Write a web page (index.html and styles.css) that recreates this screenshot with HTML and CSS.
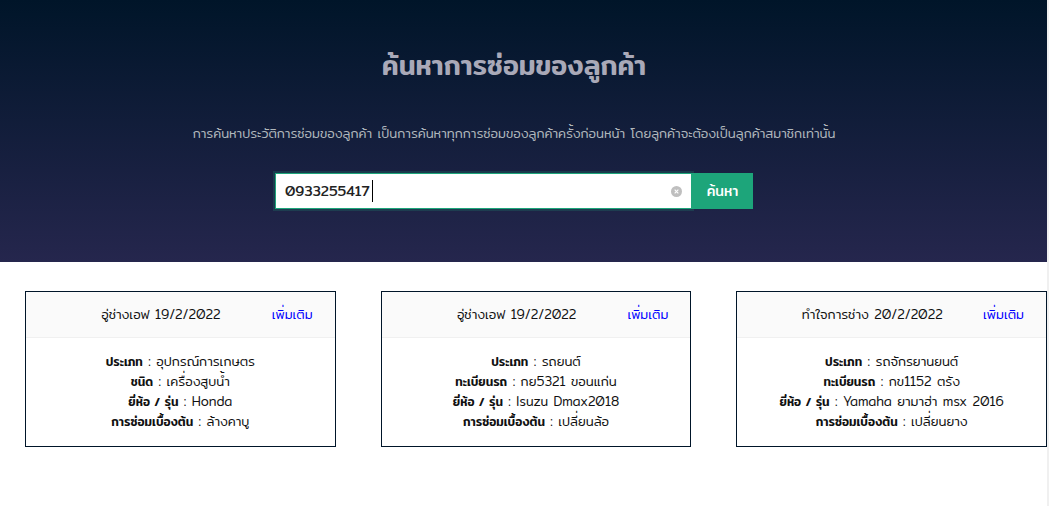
FILE: index.html
```html
<!DOCTYPE html>
<html lang="th">
<head>
<meta charset="utf-8">
<meta name="viewport" content="width=device-width, initial-scale=1">
<title>ค้นหาการซ่อมของลูกค้า</title>
<link rel="stylesheet" href="styles.css">
</head>
<body>
<main class="page">
  <header class="hero">
    <h1 class="hero-title">ค้นหาการซ่อมของลูกค้า</h1>
    <p class="hero-text">การค้นหาประวัติการซ่อมของลูกค้า เป็นการค้นหาทุกการซ่อมของลูกค้าครั้งก่อนหน้า โดยลูกค้าจะต้องเป็นลูกค้าสมาชิกเท่านั้น</p>
    <form class="search">
      <div class="search-field">
        <input class="search-input" type="text" value="0933255417" aria-label="ค้นหาการซ่อมของลูกค้า">
        <span class="caret"></span>
        <button class="clear" type="button" aria-label="ล้าง">
          <svg viewBox="0 0 12 12" width="11" height="11"><circle cx="6" cy="6" r="6" fill="#bfbfbf"/><path d="M4 4l4 4M8 4l-4 4" stroke="#fff" stroke-width="1.2"/></svg>
        </button>
      </div>
      <button class="search-button" type="submit">ค้นหา</button>
    </form>
  </header>
  <section class="cards">
    <article class="card">
      <div class="card-head"><h2 class="card-title">อู่ช่างเอฟ 19/2/2022</h2><a class="more" href="#">เพิ่มเติม</a></div>
      <div class="card-body">
        <p class="row"><b>ประเภท</b> : อุปกรณ์การเกษตร</p>
        <p class="row"><b>ชนิด</b> : เครื่องสูบน้ำ</p>
        <p class="row"><b>ยี่ห้อ / รุ่น</b> : Honda</p>
        <p class="row"><b>การซ่อมเบื้องต้น</b> : ล้างคาบู</p>
      </div>
    </article>
    <article class="card">
      <div class="card-head"><h2 class="card-title">อู่ช่างเอฟ 19/2/2022</h2><a class="more" href="#">เพิ่มเติม</a></div>
      <div class="card-body">
        <p class="row"><b>ประเภท</b> : รถยนต์</p>
        <p class="row"><b>ทะเบียนรถ</b> : กย5321 ขอนแก่น</p>
        <p class="row"><b>ยี่ห้อ / รุ่น</b> : Isuzu Dmax2018</p>
        <p class="row"><b>การซ่อมเบื้องต้น</b> : เปลี่ยนล้อ</p>
      </div>
    </article>
    <article class="card">
      <div class="card-head"><h2 class="card-title">ทำใจการช่าง 20/2/2022</h2><a class="more" href="#">เพิ่มเติม</a></div>
      <div class="card-body">
        <p class="row"><b>ประเภท</b> : รถจักรยานยนต์</p>
        <p class="row"><b>ทะเบียนรถ</b> : กข1152 ตรัง</p>
        <p class="row"><b>ยี่ห้อ / รุ่น</b> : Yamaha ยามาฮ่า msx 2016</p>
        <p class="row"><b>การซ่อมเบื้องต้น</b> : เปลี่ยนยาง</p>
      </div>
    </article>
  </section>
</main>
</body>
</html>
```
FILE: styles.css
```css
* { box-sizing: border-box; }
body {
  margin: 0;
  background: #fff;
  color: #111;
  font-family: Mitr, Prompt, "Noto Sans", "Noto Sans Thai", sans-serif;
  font-size: 13px;
  font-weight: 300;
  line-height: 20px;
}
.page {
  min-height: 100vh;
  border-right: 2px solid #f0f0f0;
}
.hero {
  display: flex;
  flex-direction: column;
  align-items: center;
  padding: 43px 19px 53px 0;
  background: linear-gradient(#001529, #25264d);
  text-align: center;
}
.hero-title {
  margin: 0;
  color: #a9a9b8;
  font-size: 27px;
  font-weight: 500;
  line-height: 44px;
}
.hero-text {
  margin: 36px 0 30px;
  color: #b0b7bc;
}
.search {
  display: flex;
  width: 478px;
  max-width: 100%;
  height: 36px;
}
.search-field {
  position: relative;
  display: flex;
  flex: 1;
  align-items: center;
  padding: 0 9px;
  border: 1px solid #1da57a;
  background: #fff;
  box-shadow: 0 0 0 2px rgba(29, 165, 122, 0.2);
}
.search-input {
  flex: 1;
  min-width: 0;
  padding: 0;
  border: 0;
  outline: 0;
  background: none;
  color: #222;
  font: inherit;
  font-size: 14px;
  font-weight: 400;
}
.caret {
  position: absolute;
  top: 6px;
  left: 96px;
  width: 1px;
  height: 22px;
  background: #000;
}
.clear {
  display: flex;
  padding: 0;
  border: 0;
  background: none;
}
.search-button {
  position: relative;
  width: 61px;
  padding: 0;
  border: 0;
  background: #1da57a;
  color: #fff;
  font: inherit;
  font-size: 14px;
  font-weight: 400;
}
.cards {
  display: grid;
  grid-template-columns: repeat(3, 1fr);
  gap: 45px;
  padding: 29px 0 59px 25px;
}
.card {
  border: 1px solid #001529;
}
.card-head {
  display: flex;
  align-items: center;
  padding: 12px 22px 13px 24px;
  border-bottom: 1px solid #f0f0f0;
  background: #fafafa;
}
.card-title {
  flex: 1;
  margin: 0;
  font-size: 13px;
  font-weight: 300;
  text-align: center;
}
.more {
  color: #00f;
  text-decoration: none;
}
.card-body {
  padding: 13px 8px 15px;
  text-align: center;
}
.row {
  margin: 0;
}
.row b {
  font-size: 12px;
  font-weight: 500;
  line-height: 1;
}
```
